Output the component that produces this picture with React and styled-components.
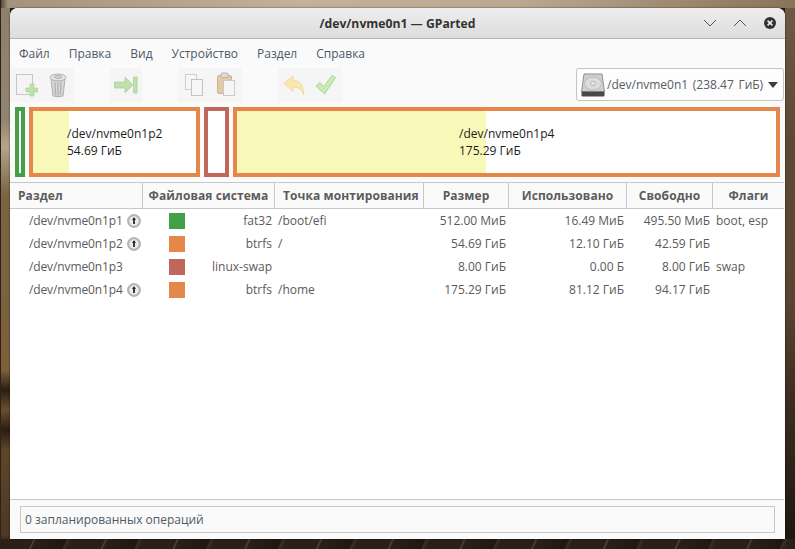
import React from 'react';
import styled, { createGlobalStyle } from 'styled-components';

const GlobalStyle = createGlobalStyle`
  html, body {
    margin: 0;
    padding: 0;
    height: 549px;
    overflow: hidden;
    background: #2a1f15;
  }
  body {
    font-family: 'Open Sans', 'Noto Sans', sans-serif;
    font-size: 12px;
    color: #5a5a5a;
  }
`;

const COLUMNS = '133px 132px 149px 85px 118px 86px 71px';

const Page = styled.div`
  width: 795px;
  height: 549px;
  box-sizing: border-box;
  padding: 8px 10px 10px;
  background-color: #2a1f15;
  background-image:
    linear-gradient(to right, #2c221a 0, #2c221a 1px, transparent 1px),
    repeating-linear-gradient(115deg, #2a2018 0, #2a2018 30px, #54442f 31px, #2a2018 33px, #1f1710 60px, #3d3022 62px, #2a2018 65px),
    linear-gradient(to right, #4c3e30 0, #a4937c 8px, #c3b199 300px, #bba88f 520px, #8a745a 790px),
    linear-gradient(to bottom, #8d7f6c 0, #918470 120px, #b4a68c 146px, #7a6444 195px, #7d5f3b 370px, #2c1e12 390px, #6a4e30 410px, #2c1e12 430px, #5f4629 450px, #4c3826 535px, #1c140d 549px),
    linear-gradient(to bottom, #6e5a45 0, #5f4833 140px, #5a4431 300px, #3c2d1f 400px, #1c150e 549px);
  background-size: 3px 549px, 100% 10px, 100% 8px, 10px 549px, 10px 549px;
  background-position: 0 0, 0 539px, 0 0, 0 0, 785px 0;
  background-repeat: no-repeat;
`;

const Window = styled.div`
  height: 531px;
  background: #fafafa;
  border-radius: 8px 8px 0 0;
  box-shadow: 0 0 2px rgba(0, 0, 0, 0.7);
  display: flex;
  flex-direction: column;
  overflow: hidden;
`;

const TitleBar = styled.div`
  height: 30px;
  flex: none;
  display: flex;
  align-items: center;
  justify-content: flex-end;
  position: relative;
  padding-right: 8px;
  gap: 16px;
  background: linear-gradient(#eeeeee, #dcdcdc);
  border-bottom: 1px solid #b4b4b4;
`;

const Title = styled.div`
  position: absolute;
  left: 0;
  right: 0;
  text-align: center;
  font-size: 12.2px;
  font-weight: 700;
  color: #333;
`;

const WindowButton = styled.svg`
  width: 14px;
  height: 14px;
  display: block;
  position: relative;
`;

const MenuBar = styled.div`
  height: 29px;
  flex: none;
  display: flex;
  align-items: center;
  padding-left: 9px;
  gap: 19px;
  color: #4d5966;
`;

const MenuItem = styled.span``;

const ToolRow = styled.div`
  height: 34px;
  flex: none;
  display: flex;
  align-items: flex-start;
  position: relative;
`;

const ToolGroup = styled.div`
  display: flex;
  margin-right: 36px;
`;

const ToolButton = styled.div`
  width: 32px;
  height: 34px;
  background: #f5f5f5;
  display: flex;
  align-items: center;
  justify-content: center;

  svg {
    display: block;
  }
`;

const DeviceCombo = styled.div`
  position: absolute;
  right: 1px;
  top: 0;
  width: 208px;
  height: 33px;
  box-sizing: border-box;
  background: #fdfdfd;
  border: 1px solid #c4c4c4;
  border-radius: 3px;
  display: flex;
  align-items: center;
  padding-left: 4px;
  gap: 2px;
  color: #555c66;
  white-space: nowrap;
`;

const ComboLabel = styled.span`
  word-spacing: 1.5px;
`;

const ComboArrow = styled.span`
  width: 0;
  height: 0;
  margin-left: 3px;
  border-left: 5.5px solid transparent;
  border-right: 5.5px solid transparent;
  border-top: 6px solid #3c3c3c;
`;

const PartitionMap = styled.div`
  height: 70px;
  flex: none;
  margin: 5px 0 0 5px;
  display: flex;
  gap: 4px;
`;

const MapPartition = styled.div`
  width: ${(p) => p.$width}px;
  box-sizing: border-box;
  border: 4px solid ${(p) => p.$color};
  background: #fff;
  display: flex;
  position: relative;
`;

const MapUsed = styled.div`
  width: ${(p) => p.$width}px;
  background: #f8f8b8;
  flex: none;
`;

const MapLabel = styled.div`
  position: absolute;
  left: ${(p) => p.$left}px;
  top: 14px;
  color: #1c1c1c;
  line-height: 17px;
`;

const Table = styled.div`
  flex: 1;
  margin-top: 5px;
  margin-right: 1px;
  background: #fff;
  border-top: 1px solid #c8c8c8;
  border-bottom: 1px solid #c8c8c8;
`;

const HeaderRow = styled.div`
  display: grid;
  grid-template-columns: ${COLUMNS};
  height: 25px;
  background: #fafafa;
  border-bottom: 1px solid #c8c8c8;
`;

const HeaderCell = styled.div`
  display: flex;
  align-items: center;
  justify-content: ${(p) => (p.$center ? 'center' : 'flex-start')};
  padding-left: ${(p) => (p.$center ? 0 : 8)}px;
  border-right: 1px solid #c8c8c8;
  font-weight: 700;
  font-size: 12px;
  letter-spacing: 0.08px;
  color: #5c5c5c;
  white-space: nowrap;

  &:last-child {
    border-right: 0;
  }
`;

const Row = styled.div`
  display: grid;
  grid-template-columns: ${COLUMNS};
  height: 23px;
  align-items: center;
  white-space: nowrap;
`;

const NameCell = styled.div`
  display: flex;
  align-items: center;
  padding-left: 19px;
  gap: 4px;
  letter-spacing: -0.12px;
`;

const FsCell = styled.div`
  display: flex;
  align-items: center;
  justify-content: space-between;
  padding: 0 3px 0 26px;
`;

const Swatch = styled.span`
  width: 16px;
  height: 16px;
  background: ${(p) => p.$color};
`;

const MountCell = styled.div`
  padding-left: 3px;
`;

const NumCell = styled.div`
  text-align: right;
  padding-right: 3px;
`;

const FlagCell = styled.div`
  padding-left: 3px;
`;

const BottomBar = styled.div`
  flex: none;
  height: 39px;
  box-sizing: border-box;
  padding: 6px 10px;
  background: #fafafa;
`;

const StatusBox = styled.div`
  height: 27px;
  box-sizing: border-box;
  border: 1px solid #c8c8c8;
  padding-left: 4px;
  display: flex;
  align-items: center;
  color: #4f5a66;
`;

const LockIcon = () => (
  <svg width="14" height="14" viewBox="0 0 15 15" style={{ flex: 'none' }}>
    <circle cx="7.5" cy="7.5" r="7" fill="#b8b8b8" stroke="#9a9a9a" strokeWidth="0.6" />
    <circle cx="7.5" cy="7.5" r="5" fill="#ececec" />
    <path d="M7.5 3.6 L9.7 6.2 L8.4 6.2 L8.4 10.6 L6.6 10.6 L6.6 6.2 L5.3 6.2 Z" fill="#1c1c1c" />
  </svg>
);

const NewIcon = () => (
  <svg width="24" height="26" viewBox="0 0 24 26">
    <rect x="2.5" y="2.5" width="16" height="20" fill="#f4f4f4" stroke="#c6c6c6" />
    <path d="M12 16h4v-4h4v4h3.5v4h-3.5v4h-4v-4h-4z" fill="#bfe0ad" stroke="#a5cf92" strokeWidth="0.6" />
  </svg>
);

const TrashIcon = () => (
  <svg width="20" height="26" viewBox="0 0 20 26">
    <path d="M3 7 L5 24 Q10 25.5 15 24 L17 7 Z" fill="#d6d6d6" stroke="#b0b0b0" />
    <path d="M7 10 L7.6 23 M10 10 V23.4 M13 10 L12.4 23" stroke="#b0b0b0" strokeWidth="1.2" />
    <ellipse cx="10" cy="5.5" rx="8" ry="3.4" fill="#e4e4e4" stroke="#b0b0b0" />
    <ellipse cx="10" cy="5" rx="3.5" ry="1.3" fill="none" stroke="#a6a6a6" />
  </svg>
);

const ApplyArrowIcon = () => (
  <svg width="24" height="20" viewBox="0 0 24 20">
    <path d="M0.5 7 H11 V2 L19 10 L11 18 V13 H0.5 Z" fill="#bfe0ad" stroke="#a9d097" strokeWidth="0.7" />
    <rect x="19.5" y="2" width="3.6" height="16" fill="#bfe0ad" stroke="#a9d097" strokeWidth="0.7" />
  </svg>
);

const CopyIcon = () => (
  <svg width="20" height="24" viewBox="0 0 20 24">
    <rect x="1.5" y="1.5" width="11" height="15" fill="#f6f6f6" stroke="#cfcfcf" />
    <rect x="7.5" y="6.5" width="11" height="16" fill="#f6f6f6" stroke="#c4c4c4" />
  </svg>
);

const PasteIcon = () => (
  <svg width="20" height="26" viewBox="0 0 20 26">
    <rect x="1.5" y="3.5" width="14" height="18" rx="1.5" fill="#e2caa2" stroke="#cdb48c" />
    <rect x="5" y="1" width="7" height="4.5" rx="1" fill="#dcdcdc" stroke="#b4b4b4" />
    <rect x="7.5" y="8.5" width="11" height="15" fill="#f6f6f6" stroke="#c8c8c8" />
  </svg>
);

const UndoIcon = () => (
  <svg width="22" height="22" viewBox="0 0 22 22">
    <path d="M1 9.5 L10 2 V6.5 C16 6.5 20.5 10 20.5 20.5 C18.5 15 15 13 10 13 V17.5 Z" fill="#fbe6ae" stroke="#eed391" strokeWidth="0.8" strokeLinejoin="round" />
  </svg>
);

const CheckIcon = () => (
  <svg width="22" height="22" viewBox="0 0 22 22">
    <path d="M1 12 L5 8.5 L8.5 13 L17 1.5 L20.5 3.5 L9.5 20 Z" fill="#cdeab6" stroke="#a6cf8f" strokeWidth="0.9" strokeLinejoin="round" />
  </svg>
);

const DiskIcon = () => (
  <svg width="24" height="24" viewBox="0 0 24 24" style={{ flex: 'none' }}>
    <path d="M3 1 H21 L23.5 19 H0.5 Z" fill="#cfcfcf" stroke="#8f8f8f" />
    <ellipse cx="12" cy="10.5" rx="8.5" ry="6.5" fill="#dcdcdc" stroke="#bcbcbc" />
    <ellipse cx="12" cy="10.5" rx="2.5" ry="2" fill="#eaeaea" stroke="#b4b4b4" />
    <rect x="0.5" y="18.5" width="23" height="5" rx="1" fill="#484848" />
  </svg>
);

const TOOLS = [
  [<NewIcon key="new" />, <TrashIcon key="trash" />],
  [<ApplyArrowIcon key="resize" />],
  [<CopyIcon key="copy" />, <PasteIcon key="paste" />],
  [<UndoIcon key="undo" />, <CheckIcon key="check" />],
];

const MENU = ['Файл', 'Правка', 'Вид', 'Устройство', 'Раздел', 'Справка'];

const HEADERS = [
  ['Раздел', false],
  ['Файловая система', true],
  ['Точка монтирования', false],
  ['Размер', true],
  ['Использовано', true],
  ['Свободно', true],
  ['Флаги', true],
];

const GREEN = '#43a047';
const ORANGE = '#e5874b';
const RED = '#c1665a';

const PARTITIONS = [
  { name: '/dev/nvme0n1p1', locked: true, color: GREEN, fs: 'fat32', mount: '/boot/efi', size: '512.00 МиБ', used: '16.49 МиБ', free: '495.50 МиБ', flags: 'boot, esp' },
  { name: '/dev/nvme0n1p2', locked: true, color: ORANGE, fs: 'btrfs', mount: '/', size: '54.69 ГиБ', used: '12.10 ГиБ', free: '42.59 ГиБ', flags: '' },
  { name: '/dev/nvme0n1p3', locked: false, color: RED, fs: 'linux-swap', mount: '', size: '8.00 ГиБ', used: '0.00 Б', free: '8.00 ГиБ', flags: 'swap' },
  { name: '/dev/nvme0n1p4', locked: true, color: ORANGE, fs: 'btrfs', mount: '/home', size: '175.29 ГиБ', used: '81.12 ГиБ', free: '94.17 ГиБ', flags: '' },
];

const App = () => {
  return (
    <Page>
      <GlobalStyle />
      <Window>
        <TitleBar>
          <Title>/dev/nvme0n1 — GParted</Title>
          <WindowButton viewBox="0 0 14 14">
            <path d="M1 4 L7 10 L13 4" fill="none" stroke="#555" strokeWidth="1" />
          </WindowButton>
          <WindowButton viewBox="0 0 14 14">
            <path d="M1 10 L7 4 L13 10" fill="none" stroke="#555" strokeWidth="1" />
          </WindowButton>
          <WindowButton viewBox="0 0 14 14">
            <circle cx="7" cy="7" r="6" fill="#333" />
            <path d="M4.6 4.6 L9.4 9.4 M9.4 4.6 L4.6 9.4" stroke="#eee" strokeWidth="1.6" />
          </WindowButton>
        </TitleBar>

        <MenuBar>
          {MENU.map((item) => (
            <MenuItem key={item}>{item}</MenuItem>
          ))}
        </MenuBar>

        <ToolRow>
          {TOOLS.map((group, i) => (
            <ToolGroup key={i}>
              {group.map((icon, j) => (
                <ToolButton key={j}>{icon}</ToolButton>
              ))}
            </ToolGroup>
          ))}
          <DeviceCombo>
            <DiskIcon />
            <ComboLabel>/dev/nvme0n1 (238.47 ГиБ)</ComboLabel>
            <ComboArrow />
          </DeviceCombo>
        </ToolRow>

        <PartitionMap>
          <MapPartition $width={10} $color={GREEN} />
          <MapPartition $width={171} $color={ORANGE}>
            <MapUsed $width={36} />
            <MapLabel $left={34}>
              /dev/nvme0n1p2
              <br />
              54.69 ГиБ
            </MapLabel>
          </MapPartition>
          <MapPartition $width={25} $color={RED} />
          <MapPartition $width={547} $color={ORANGE}>
            <MapUsed $width={249} />
            <MapLabel $left={222}>
              /dev/nvme0n1p4
              <br />
              175.29 ГиБ
            </MapLabel>
          </MapPartition>
        </PartitionMap>

        <Table>
          <HeaderRow>
            {HEADERS.map(([label, center]) => (
              <HeaderCell key={label} $center={center}>
                {label}
              </HeaderCell>
            ))}
          </HeaderRow>
          {PARTITIONS.map((p) => (
            <Row key={p.name}>
              <NameCell>
                {p.name}
                {p.locked && <LockIcon />}
              </NameCell>
              <FsCell>
                <Swatch $color={p.color} />
                {p.fs}
              </FsCell>
              <MountCell>{p.mount}</MountCell>
              <NumCell>{p.size}</NumCell>
              <NumCell>{p.used}</NumCell>
              <NumCell>{p.free}</NumCell>
              <FlagCell>{p.flags}</FlagCell>
            </Row>
          ))}
        </Table>

        <BottomBar>
          <StatusBox>0 запланированных операций</StatusBox>
        </BottomBar>
      </Window>
    </Page>
  );
};

export default App;
